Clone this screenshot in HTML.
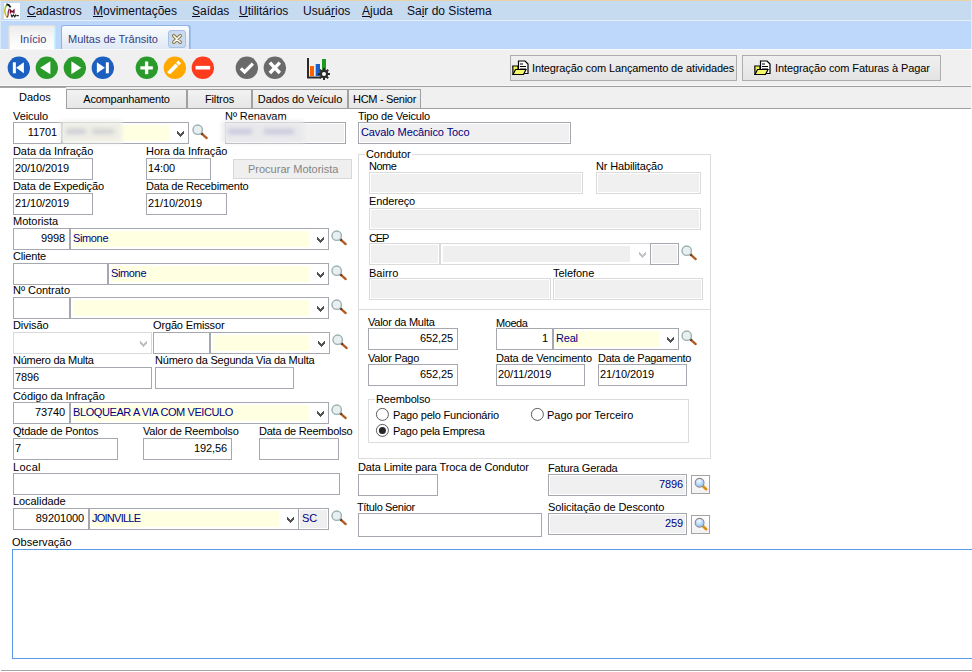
<!DOCTYPE html>
<html><head><meta charset="utf-8">
<style>
*{box-sizing:border-box;margin:0;padding:0}
html,body{width:972px;height:672px;overflow:hidden;background:#fff}
body{position:relative;font-family:"Liberation Sans",sans-serif;font-size:11px;color:#000}
.a{position:absolute}
.l{position:absolute;white-space:nowrap;line-height:13px;letter-spacing:-0.2px}
.b{position:absolute;border:1px solid #a6a8b0;background:#fff;white-space:nowrap;overflow:hidden;line-height:20px;padding:0 1px;letter-spacing:-0.1px}
.r{text-align:right;padding-right:4px}
.g{background:#f0f0f0;box-shadow:inset 0 0 0 1px #fff}
.dg{background:#f0f0f0;border-color:#dadada;box-shadow:inset 0 0 0 1px #fff}
.n{color:#000080}
.y{position:absolute;background:#ffffe1}
.cv{position:absolute;width:9px;height:7px}
.mg{position:absolute;width:17px;height:17px}
.menu span{position:absolute;top:4px;font-size:12px;color:#0c0c20;line-height:14px}
.menu u{text-decoration:none;position:relative}.menu u:after{content:"";position:absolute;left:0;right:0;top:12px;height:1px;background:#0c0c20}
.tab{position:absolute;top:89px;height:20px;border:1px solid #a0a0a0;border-bottom:none;background:linear-gradient(#f2f2f2,#e6e6e6);line-height:18px;text-align:center;letter-spacing:-0.2px}
.ic{position:absolute;top:56px;width:23px;height:23px}
.btn{position:absolute;top:55px;height:26px;border:1px solid #adadad;background:linear-gradient(#f0f0f0,#e3e3e3);line-height:24px;white-space:nowrap;letter-spacing:-0.1px}
</style></head><body>

<!-- title/menu bar -->
<div class="a" style="left:0;top:0;width:972px;height:1px;background:#e8d2a6"></div>
<div class="a" style="left:0;top:1px;width:972px;height:19px;background:#c6daf0"></div>
<div class="a" style="left:0;top:20px;width:972px;height:1px;background:#e6eef8"></div>
<div class="a" style="left:0;top:21px;width:972px;height:28px;background:#bdd8fb"></div>
<div class="a" style="left:0;top:49px;width:972px;height:1px;background:#fafafa"></div>
<div class="a" style="left:0;top:50px;width:972px;height:36px;background:#f0f0f0"></div>
<div class="a" style="left:0;top:1px;width:1px;height:48px;background:#dde8f6"></div>
<div class="a" style="left:971px;top:0;width:1px;height:49px;background:#e2ebf6"></div>

<!-- logo -->
<svg class="a" style="left:4px;top:3px" width="16" height="16" viewBox="0 0 16 16">
<defs><linearGradient id="lg" x1="0" y1="0" x2="0" y2="1"><stop offset="0" stop-color="#80c030"/><stop offset="1" stop-color="#e8c018"/></linearGradient></defs>
<rect width="16" height="16" fill="#fff"/>
<path d="M2.8 1.8 Q0.4 5 0.9 9 Q1.3 12.5 3 14" stroke="url(#lg)" stroke-width="1.6" fill="none"/>
<path d="M2.4 1.6 Q4.6 0.9 6.6 4.4" stroke="#101828" stroke-width="1.9" fill="none"/>
<path d="M5.3 5.8 Q3.8 9 4.1 12 Q4 14 2.6 14.4" stroke="#7a2040" stroke-width="1.2" fill="none"/>
<path d="M6.4 10.6 V7.2 L8.1 9 L9.9 7.2 V10.6" stroke="#701030" stroke-width="1.4" fill="none"/>
<path d="M7 11.4 L8 13.8 L9.4 11.9 L10.8 13.8 L11.9 11.4 M12.4 12.6 H14.8" stroke="#202020" stroke-width="1.2" fill="none"/>
</svg>

<div class="menu">
<span style="left:27px"><u>C</u>adastros</span>
<span style="left:93px"><u>M</u>ovimentações</span>
<span style="left:192px"><u>S</u>aídas</span>
<span style="left:239px"><u>U</u>tilitários</span>
<span style="left:303px">Usuá<u>r</u>ios</span>
<span style="left:362px"><u>A</u>juda</span>
<span style="left:407px">Sa<u>i</u>r do Sistema</span>
</div>

<!-- doc tabs -->
<div class="a" style="left:8px;top:25px;width:48px;height:24px;border:1px solid #dadde2;border-bottom:none;border-radius:3px 3px 0 0;background:linear-gradient(#ececec,#f6f6f6 45%,#ffffff)"></div>
<div class="a" style="left:9px;top:28px;width:1px;height:21px;background:#c4f2ff"></div>
<div class="a" style="left:54px;top:28px;width:1px;height:21px;background:#c4f2ff"></div>
<div class="a" style="left:20px;top:32px;font-size:11px;color:#3b3b80;line-height:14px">Início</div>
<div class="a" style="left:61px;top:25px;width:129px;height:24px;border:1px solid #8fb2e2;border-bottom:none;border-radius:3px 3px 0 0;background:linear-gradient(#fafcff,#dfe8f5);box-shadow:1px 0 0 #9ec0ee"></div>
<div class="a" style="left:68px;top:32px;font-size:11px;color:#35407a;line-height:14px">Multas de Trânsito</div>
<div class="a" style="left:168px;top:30px;width:18px;height:18px;border:1px solid #a9c1e3;border-radius:3px;background:#c9d9ef"></div>
<svg class="a" style="left:172px;top:34px" width="10" height="10" viewBox="0 0 10 10">
<path d="M1.8 1.8 L8.2 8.2 M8.2 1.8 L1.8 8.2" stroke="#86763a" stroke-width="3.4" stroke-linecap="round"/>
<path d="M1.8 1.8 L8.2 8.2 M8.2 1.8 L1.8 8.2" stroke="#fff" stroke-width="1.5" stroke-linecap="round"/>
</svg>

<!-- toolbar icons -->
<svg class="ic" style="left:7px" viewBox="-0.35 -0.3 23 23"><circle cx="11.5" cy="11.5" r="11.2" fill="#1b5fc0"/><rect x="5.5" y="6" width="3" height="11" fill="#fff"/><path d="M8.8 11.5 L16.5 6 L16.5 17 Z" fill="#fff"/></svg>
<svg class="ic" style="left:35px" viewBox="-0.35 -0.3 23 23"><circle cx="11.5" cy="11.5" r="11.2" fill="#2a9b2a"/><path d="M4.8 11.5 L15 5 L15 18 Z" fill="#fff"/></svg>
<svg class="ic" style="left:63px" viewBox="-0.35 -0.3 23 23"><circle cx="11.5" cy="11.5" r="11.2" fill="#2a9b2a"/><path d="M8 5 L18 11.5 L8 18 Z" fill="#fff"/></svg>
<svg class="ic" style="left:91px" viewBox="-0.35 -0.3 23 23"><circle cx="11.5" cy="11.5" r="11.2" fill="#1b5fc0"/><path d="M5.5 6 L13.5 11.5 L5.5 17 Z" fill="#fff"/><rect x="14.5" y="6" width="3" height="11" fill="#fff"/></svg>
<svg class="ic" style="left:135px" viewBox="-0.35 -0.3 23 23"><circle cx="11.5" cy="11.5" r="11.2" fill="#2a9b2a"/><rect x="5" y="10" width="12.5" height="3.2" fill="#fff"/><rect x="9.6" y="5.2" width="3.3" height="12.7" fill="#fff"/></svg>
<svg class="ic" style="left:163px" viewBox="-0.35 -0.3 23 23"><circle cx="11.5" cy="11.5" r="11.2" fill="#ffa900"/><g transform="translate(5.2,17.1) rotate(-46)" fill="#fff"><path d="M0 -1.9 L11.9 -1.9 L11.9 1.9 L1.2 1.9 L0 0.7 Z"/><rect x="12.8" y="-1.9" width="3.3" height="3.8"/></g></svg>
<svg class="ic" style="left:191px" viewBox="-0.35 -0.3 23 23"><circle cx="11.5" cy="11.5" r="11.2" fill="#ff3b1d"/><rect x="4.2" y="9.6" width="14.6" height="3.6" fill="#fff"/></svg>
<svg class="ic" style="left:235px" viewBox="-0.35 -0.3 23 23"><circle cx="11.5" cy="11.5" r="11.2" fill="#6a6a6a"/><path d="M5.5 12 L9.3 15.6 L17.5 7.3" stroke="#fff" stroke-width="3.2" fill="none"/></svg>
<svg class="ic" style="left:263px" viewBox="-0.35 -0.3 23 23"><circle cx="11.5" cy="11.5" r="11.2" fill="#6a6a6a"/><path d="M6.5 6.3 L16.5 16.7 M16.5 6.3 L6.5 16.7" stroke="#fff" stroke-width="3.4"/></svg>
<svg class="a" style="left:305px;top:56px" width="26" height="26" viewBox="0 0 26 26">
<path d="M3 2 V21.5 H15" stroke="#2a2a2a" stroke-width="2" fill="none"/>
<rect x="5" y="10" width="4" height="10" fill="#ff6100"/>
<rect x="10.7" y="8" width="4.3" height="12" fill="#1a5fc8"/>
<rect x="17" y="3" width="4" height="11" fill="#1e9a1e"/>
<g transform="translate(19,18)"><circle r="4.2" fill="#2a2a2a"/><path d="M0 -6 V6 M-6 0 H6 M-4.2 -4.2 L4.2 4.2 M4.2 -4.2 L-4.2 4.2" stroke="#2a2a2a" stroke-width="2"/><circle r="2" fill="#fff"/></g>
</svg>

<!-- integration buttons -->
<div class="btn" style="left:510px;width:227px;padding-left:21px;letter-spacing:-0.13px">Integração com Lançamento de atividades</div>
<div class="btn" style="left:742px;width:199px;padding-left:32px">Integração com Faturas à Pagar</div>
<svg class="a" style="left:512px;top:60px" width="17" height="16" viewBox="0 0 17 16">
<path d="M6.5 1 H13 L16 4 V13.5 H6.5 Z" fill="#fff" stroke="#000" stroke-width="1.2"/>
<path d="M8 4 H11 M8 6.5 H14 M8 9 H14" stroke="#000" stroke-width="1"/>
<path d="M0.8 6 H6 V14.5 H1 Z" fill="#f2f258" stroke="#000" stroke-width="1.2"/>
<path d="M1 14.5 L3.5 9.5 H14 L11.5 14.5 Z" fill="#f6f66a" stroke="#000" stroke-width="1.2"/>
</svg>
<svg class="a" style="left:754px;top:60px" width="17" height="16" viewBox="0 0 17 16">
<path d="M6.5 1 H13 L16 4 V13.5 H6.5 Z" fill="#fff" stroke="#000" stroke-width="1.2"/>
<path d="M8 4 H11 M8 6.5 H14 M8 9 H14" stroke="#000" stroke-width="1"/>
<path d="M0.8 6 H6 V14.5 H1 Z" fill="#f2f258" stroke="#000" stroke-width="1.2"/>
<path d="M1 14.5 L3.5 9.5 H14 L11.5 14.5 Z" fill="#f6f66a" stroke="#000" stroke-width="1.2"/>
</svg>

<!-- form tabs -->
<div class="a" style="left:0;top:85px;width:972px;height:1px;background:#f8f8f8"></div>
<div class="a" style="left:0;top:86px;width:972px;height:1px;background:#a0a0a0"></div>
<div class="a" style="left:66px;top:87px;width:906px;height:22px;background:#f0f0f0"></div>
<div class="a" style="left:0;top:87px;width:66px;height:22px;background:#fff"></div>
<div class="a" style="left:0;top:87px;width:66px;height:1px;background:#a8a8a8"></div>
<div class="l" style="left:19px;top:91px;letter-spacing:0">Dados</div>
<div class="tab" style="left:66px;width:121px;letter-spacing:-0.2px">Acompanhamento</div>
<div class="tab" style="left:187px;width:65px;letter-spacing:-0.12px">Filtros</div>
<div class="tab" style="left:252px;width:96px;letter-spacing:-0.12px">Dados do Veículo</div>
<div class="tab" style="left:348px;width:73px;letter-spacing:-0.3px">HCM - Senior</div>
<div class="a" style="left:66px;top:108px;width:906px;height:1px;background:#a0a0a0"></div>
<div class="a" style="left:971px;top:50px;width:1px;height:59px;background:#f7f7f7"></div>

<!-- FORM CONTENT (added below) -->
<!--FORM-->
<div class="l" style="left:13px;top:110px;letter-spacing:-0.07px">Veiculo</div>
<div class="b r" style="left:13px;top:122px;width:49px;height:22px;line-height:18px">11701</div>
<div class="b" style="left:62px;top:122px;width:127px;height:22px;line-height:18px"></div>
<div class="y" style="left:65px;top:125px;width:104px;height:16px"></div>
<svg class="a" style="left:177px;top:131px" width="7" height="6" viewBox="0 0 7 6" shape-rendering="crispEdges"><path d="M0 0H1V1H2V2H3V3H4V2H5V1H6V0H7V3H6V4H5V5H4V6H3V5H2V4H1V3H0Z" fill="#535353"/></svg>
<div class="a" style="left:60px;top:121px;width:62px;height:22px;background:#eeeee8;filter:blur(2px);opacity:.9"></div><div class="a" style="left:66px;top:129px;width:20px;height:5px;background:#b4b6c6;filter:blur(2.2px);opacity:.6"></div><div class="a" style="left:92px;top:129px;width:22px;height:5px;background:#bcbcc4;filter:blur(2.2px);opacity:.6"></div>
<svg class="mg" style="left:192px;top:123px" viewBox="0 0 17 17"><path d="M9.4 10.4 L14.7 15.1" stroke="#b05a22" stroke-width="2.3" stroke-linecap="round"/><path d="M9.2 10.2 L10.6 11.5" stroke="#5a3018" stroke-width="2.3"/><circle cx="5.7" cy="6.7" r="4.7" fill="#e9eff0" stroke="#9bb0b0" stroke-width="1.4"/></svg>
<div class="l" style="left:225px;top:110px;letter-spacing:-0.06px">Nº Renavam</div>
<div class="b g" style="left:225px;top:122px;width:121px;height:22px;line-height:18px"></div>
<div class="a" style="left:222px;top:121px;width:82px;height:22px;background:#e9e9ec;filter:blur(2px);opacity:.9"></div><div class="a" style="left:228px;top:129px;width:24px;height:5px;background:#aeb0d2;filter:blur(2.2px);opacity:.6"></div><div class="a" style="left:264px;top:129px;width:30px;height:5px;background:#b2b2d0;filter:blur(2.2px);opacity:.6"></div>
<div class="l" style="left:358px;top:110px;letter-spacing:-0.2px">Tipo de Veiculo</div>
<div class="b g n" style="left:358px;top:122px;width:213px;height:22px;line-height:18px;padding-left:2px">Cavalo Mecânico Toco</div>
<div class="l" style="left:13px;top:145px;letter-spacing:-0.07px">Data da Infração</div>
<div class="b" style="left:13px;top:158px;width:80px;height:22px;line-height:18px">20/10/2019</div>
<div class="l" style="left:146px;top:145px;letter-spacing:-0.03px">Hora da Infração</div>
<div class="b" style="left:146px;top:158px;width:65px;height:22px;line-height:18px">14:00</div>
<div class="a" style="left:233px;top:159px;width:119px;height:20px;border:1px solid #d8d8d8;background:#efefef;color:#858585;text-align:left;line-height:19px;letter-spacing:0px;padding-left:14px">Procurar Motorista</div>
<div class="l" style="left:13px;top:180px;letter-spacing:-0.12px">Data de Expedição</div>
<div class="b" style="left:13px;top:193px;width:80px;height:22px;line-height:18px">21/10/2019</div>
<div class="l" style="left:146px;top:180px;letter-spacing:-0.21px">Data de Recebimento</div>
<div class="b" style="left:146px;top:193px;width:81px;height:22px;line-height:18px">21/10/2019</div>
<div class="l" style="left:13px;top:215px;letter-spacing:0.0px">Motorista</div>
<div class="b r" style="left:13px;top:228px;width:57px;height:22px;line-height:18px">9998</div>
<div class="b" style="left:70px;top:228px;width:259px;height:22px;line-height:18px"></div>
<div class="y" style="left:73px;top:231px;width:236px;height:16px"></div>
<div class="l n" style="left:73px;top:232px;letter-spacing:-0.36px">Simone</div>
<svg class="a" style="left:317px;top:237px" width="7" height="6" viewBox="0 0 7 6" shape-rendering="crispEdges"><path d="M0 0H1V1H2V2H3V3H4V2H5V1H6V0H7V3H6V4H5V5H4V6H3V5H2V4H1V3H0Z" fill="#535353"/></svg>
<svg class="mg" style="left:331px;top:229px" viewBox="0 0 17 17"><path d="M9.4 10.4 L14.7 15.1" stroke="#b05a22" stroke-width="2.3" stroke-linecap="round"/><path d="M9.2 10.2 L10.6 11.5" stroke="#5a3018" stroke-width="2.3"/><circle cx="5.7" cy="6.7" r="4.7" fill="#e9eff0" stroke="#9bb0b0" stroke-width="1.4"/></svg>
<div class="l" style="left:13px;top:250px;letter-spacing:-0.17px">Cliente</div>
<div class="b" style="left:13px;top:263px;width:95px;height:22px;line-height:18px"></div>
<div class="b" style="left:108px;top:263px;width:221px;height:22px;line-height:18px"></div>
<div class="y" style="left:111px;top:266px;width:198px;height:16px"></div>
<div class="l n" style="left:111px;top:267px;letter-spacing:-0.36px">Simone</div>
<svg class="a" style="left:317px;top:272px" width="7" height="6" viewBox="0 0 7 6" shape-rendering="crispEdges"><path d="M0 0H1V1H2V2H3V3H4V2H5V1H6V0H7V3H6V4H5V5H4V6H3V5H2V4H1V3H0Z" fill="#535353"/></svg>
<svg class="mg" style="left:331px;top:264px" viewBox="0 0 17 17"><path d="M9.4 10.4 L14.7 15.1" stroke="#b05a22" stroke-width="2.3" stroke-linecap="round"/><path d="M9.2 10.2 L10.6 11.5" stroke="#5a3018" stroke-width="2.3"/><circle cx="5.7" cy="6.7" r="4.7" fill="#e9eff0" stroke="#9bb0b0" stroke-width="1.4"/></svg>
<div class="l" style="left:13px;top:284px;letter-spacing:-0.02px">Nº Contrato</div>
<div class="b" style="left:13px;top:297px;width:57px;height:22px;line-height:18px"></div>
<div class="b" style="left:70px;top:297px;width:259px;height:22px;line-height:18px"></div>
<div class="y" style="left:73px;top:300px;width:236px;height:16px"></div>
<svg class="a" style="left:317px;top:306px" width="7" height="6" viewBox="0 0 7 6" shape-rendering="crispEdges"><path d="M0 0H1V1H2V2H3V3H4V2H5V1H6V0H7V3H6V4H5V5H4V6H3V5H2V4H1V3H0Z" fill="#535353"/></svg>
<svg class="mg" style="left:331px;top:298px" viewBox="0 0 17 17"><path d="M9.4 10.4 L14.7 15.1" stroke="#b05a22" stroke-width="2.3" stroke-linecap="round"/><path d="M9.2 10.2 L10.6 11.5" stroke="#5a3018" stroke-width="2.3"/><circle cx="5.7" cy="6.7" r="4.7" fill="#e9eff0" stroke="#9bb0b0" stroke-width="1.4"/></svg>
<div class="l" style="left:13px;top:319px;letter-spacing:-0.08px">Divisão</div>
<div class="b" style="left:13px;top:332px;width:139px;height:22px;line-height:18px;border-color:#dadada"></div>
<svg class="a" style="left:140px;top:341px" width="7" height="6" viewBox="0 0 7 6" shape-rendering="crispEdges"><path d="M0 0H1V1H2V2H3V3H4V2H5V1H6V0H7V3H6V4H5V5H4V6H3V5H2V4H1V3H0Z" fill="#c0c0c0"/></svg>
<div class="l" style="left:153px;top:319px;letter-spacing:-0.15px">Orgão Emissor</div>
<div class="b" style="left:153px;top:332px;width:57px;height:22px;line-height:18px"></div>
<div class="b" style="left:210px;top:332px;width:120px;height:22px;line-height:18px"></div>
<div class="y" style="left:213px;top:335px;width:97px;height:16px"></div>
<svg class="a" style="left:318px;top:341px" width="7" height="6" viewBox="0 0 7 6" shape-rendering="crispEdges"><path d="M0 0H1V1H2V2H3V3H4V2H5V1H6V0H7V3H6V4H5V5H4V6H3V5H2V4H1V3H0Z" fill="#535353"/></svg>
<svg class="mg" style="left:332px;top:333px" viewBox="0 0 17 17"><path d="M9.4 10.4 L14.7 15.1" stroke="#b05a22" stroke-width="2.3" stroke-linecap="round"/><path d="M9.2 10.2 L10.6 11.5" stroke="#5a3018" stroke-width="2.3"/><circle cx="5.7" cy="6.7" r="4.7" fill="#e9eff0" stroke="#9bb0b0" stroke-width="1.4"/></svg>
<div class="l" style="left:13px;top:354px;letter-spacing:-0.25px">Número da Multa</div>
<div class="b" style="left:13px;top:367px;width:139px;height:22px;line-height:18px">7896</div>
<div class="l" style="left:155px;top:354px;letter-spacing:-0.2px">Número da Segunda Via da Multa</div>
<div class="b" style="left:155px;top:367px;width:139px;height:22px;line-height:18px"></div>
<div class="l" style="left:13px;top:390px;letter-spacing:-0.07px">Código da Infração</div>
<div class="b r" style="left:13px;top:402px;width:57px;height:22px;line-height:18px">73740</div>
<div class="b" style="left:70px;top:402px;width:259px;height:22px;line-height:18px"></div>
<div class="y" style="left:73px;top:405px;width:236px;height:16px"></div>
<div class="l n" style="left:73px;top:406px;letter-spacing:-0.41px">BLOQUEAR A VIA COM VEICULO</div>
<svg class="a" style="left:317px;top:411px" width="7" height="6" viewBox="0 0 7 6" shape-rendering="crispEdges"><path d="M0 0H1V1H2V2H3V3H4V2H5V1H6V0H7V3H6V4H5V5H4V6H3V5H2V4H1V3H0Z" fill="#535353"/></svg>
<svg class="mg" style="left:331px;top:403px" viewBox="0 0 17 17"><path d="M9.4 10.4 L14.7 15.1" stroke="#b05a22" stroke-width="2.3" stroke-linecap="round"/><path d="M9.2 10.2 L10.6 11.5" stroke="#5a3018" stroke-width="2.3"/><circle cx="5.7" cy="6.7" r="4.7" fill="#e9eff0" stroke="#9bb0b0" stroke-width="1.4"/></svg>
<div class="l" style="left:13px;top:425px;letter-spacing:-0.22px">Qtdade de Pontos</div>
<div class="b" style="left:13px;top:438px;width:105px;height:22px;line-height:18px">7</div>
<div class="l" style="left:143px;top:425px;letter-spacing:-0.18px">Valor de Reembolso</div>
<div class="b r" style="left:143px;top:438px;width:89px;height:22px;line-height:18px">192,56</div>
<div class="l" style="left:259px;top:425px;letter-spacing:-0.22px">Data de Reembolso</div>
<div class="b" style="left:259px;top:438px;width:80px;height:22px;line-height:18px"></div>
<div class="l" style="left:13px;top:461px;letter-spacing:0.3px">Local</div>
<div class="b" style="left:13px;top:473px;width:327px;height:22px;line-height:18px"></div>
<div class="l" style="left:13px;top:495px;letter-spacing:-0.06px">Localidade</div>
<div class="b r" style="left:13px;top:508px;width:76px;height:22px;line-height:18px">89201000</div>
<div class="b" style="left:89px;top:508px;width:210px;height:22px;line-height:18px"></div>
<div class="y" style="left:92px;top:511px;width:187px;height:16px"></div>
<div class="l n" style="left:92px;top:512px;letter-spacing:-0.75px">JOINVILLE</div>
<svg class="a" style="left:287px;top:517px" width="7" height="6" viewBox="0 0 7 6" shape-rendering="crispEdges"><path d="M0 0H1V1H2V2H3V3H4V2H5V1H6V0H7V3H6V4H5V5H4V6H3V5H2V4H1V3H0Z" fill="#535353"/></svg>
<div class="b" style="left:298px;top:508px;width:31px;height:22px;line-height:18px"></div>
<div class="a" style="left:300px;top:510px;width:27px;height:18px;background:#efefef"></div>
<div class="l n" style="left:302px;top:512px">SC</div>
<svg class="mg" style="left:331px;top:509px" viewBox="0 0 17 17"><path d="M9.4 10.4 L14.7 15.1" stroke="#b05a22" stroke-width="2.3" stroke-linecap="round"/><path d="M9.2 10.2 L10.6 11.5" stroke="#5a3018" stroke-width="2.3"/><circle cx="5.7" cy="6.7" r="4.7" fill="#e9eff0" stroke="#9bb0b0" stroke-width="1.4"/></svg>
<div class="l" style="left:12px;top:536px;letter-spacing:0.03px">Observação</div>
<div class="a" style="left:12px;top:549px;width:980px;height:110px;border:1px solid #5a9ae6"></div>
<div class="a" style="left:1px;top:670px;width:971px;height:1px;background:#a5a5a5"></div>
<div class="a" style="left:358px;top:154px;width:353px;height:305px;border:1px solid #dcdcdc"></div>
<div class="a" style="left:358px;top:309px;width:353px;height:1px;background:#dcdcdc"></div>
<div class="l" style="left:365px;top:148px;background:#fff;padding:0 1px;letter-spacing:-0.07px">Condutor</div>
<div class="l" style="left:369px;top:160px;letter-spacing:-0.53px">Nome</div>
<div class="b dg" style="left:369px;top:172px;width:214px;height:22px;line-height:18px"></div>
<div class="l" style="left:596px;top:160px;letter-spacing:-0.15px">Nr Habilitação</div>
<div class="b dg" style="left:596px;top:172px;width:105px;height:22px;line-height:18px"></div>
<div class="l" style="left:369px;top:195px;letter-spacing:-0.14px">Endereço</div>
<div class="b dg" style="left:369px;top:208px;width:332px;height:22px;line-height:18px"></div>
<div class="l" style="left:369px;top:232px;letter-spacing:-1.1px">CEP</div>
<div class="b dg" style="left:369px;top:243px;width:71px;height:22px;line-height:18px"></div>
<div class="b" style="left:440px;top:243px;width:211px;height:22px;line-height:18px;border-color:#dadada"></div>
<div class="a" style="left:443px;top:246px;width:187px;height:16px;background:#efefef"></div>
<svg class="a" style="left:639px;top:252px" width="7" height="6" viewBox="0 0 7 6" shape-rendering="crispEdges"><path d="M0 0H1V1H2V2H3V3H4V2H5V1H6V0H7V3H6V4H5V5H4V6H3V5H2V4H1V3H0Z" fill="#c4c4c4"/></svg>
<div class="b g" style="left:650px;top:243px;width:29px;height:22px;line-height:18px"></div>
<svg class="mg" style="left:681px;top:244px" viewBox="0 0 17 17"><path d="M9.4 10.4 L14.7 15.1" stroke="#b05a22" stroke-width="2.3" stroke-linecap="round"/><path d="M9.2 10.2 L10.6 11.5" stroke="#5a3018" stroke-width="2.3"/><circle cx="5.7" cy="6.7" r="4.7" fill="#e9eff0" stroke="#9bb0b0" stroke-width="1.4"/></svg>
<div class="l" style="left:369px;top:267px;letter-spacing:0.0px">Bairro</div>
<div class="b dg" style="left:369px;top:278px;width:182px;height:22px;line-height:18px"></div>
<div class="l" style="left:553px;top:267px;letter-spacing:-0.04px">Telefone</div>
<div class="b dg" style="left:553px;top:278px;width:150px;height:22px;line-height:18px"></div>
<div class="l" style="left:368px;top:316px;letter-spacing:-0.25px">Valor da Multa</div>
<div class="b r" style="left:368px;top:328px;width:90px;height:22px;line-height:18px">652,25</div>
<div class="l" style="left:496px;top:317px;letter-spacing:-0.44px">Moeda</div>
<div class="b r" style="left:496px;top:328px;width:57px;height:22px;line-height:18px">1</div>
<div class="b" style="left:553px;top:328px;width:126px;height:22px;line-height:18px"></div>
<div class="y" style="left:556px;top:331px;width:103px;height:16px"></div>
<div class="l n" style="left:556px;top:332px">Real</div>
<svg class="a" style="left:667px;top:337px" width="7" height="6" viewBox="0 0 7 6" shape-rendering="crispEdges"><path d="M0 0H1V1H2V2H3V3H4V2H5V1H6V0H7V3H6V4H5V5H4V6H3V5H2V4H1V3H0Z" fill="#535353"/></svg>
<svg class="mg" style="left:681px;top:329px" viewBox="0 0 17 17"><path d="M9.4 10.4 L14.7 15.1" stroke="#b05a22" stroke-width="2.3" stroke-linecap="round"/><path d="M9.2 10.2 L10.6 11.5" stroke="#5a3018" stroke-width="2.3"/><circle cx="5.7" cy="6.7" r="4.7" fill="#e9eff0" stroke="#9bb0b0" stroke-width="1.4"/></svg>
<div class="l" style="left:368px;top:352px;letter-spacing:-0.25px">Valor Pago</div>
<div class="b r" style="left:368px;top:364px;width:90px;height:22px;line-height:18px">652,25</div>
<div class="l" style="left:496px;top:352px;letter-spacing:-0.18px">Data de Vencimento</div>
<div class="b" style="left:496px;top:364px;width:89px;height:22px;line-height:18px">20/11/2019</div>
<div class="l" style="left:598px;top:352px;letter-spacing:-0.28px">Data de Pagamento</div>
<div class="b" style="left:598px;top:364px;width:89px;height:22px;line-height:18px">21/10/2019</div>
<div class="a" style="left:368px;top:399px;width:321px;height:44px;border:1px solid #dcdcdc"></div>
<div class="l" style="left:375px;top:393px;background:#fff;padding:0 1px;letter-spacing:-0.16px">Reembolso</div>
<svg class="a" style="left:375px;top:407px" width="15" height="15" viewBox="0 0 15 15"><circle cx="7.399999999999977" cy="7.399999999999977" r="6" fill="#fff" stroke="#4a4a4a" stroke-width="0.9"/></svg>
<div class="l" style="left:393px;top:409px;letter-spacing:-0.2px">Pago pelo Funcionário</div>
<svg class="a" style="left:530px;top:407px" width="15" height="15" viewBox="0 0 15 15"><circle cx="7.399999999999977" cy="7.399999999999977" r="6" fill="#fff" stroke="#4a4a4a" stroke-width="0.9"/></svg>
<div class="l" style="left:547px;top:409px;letter-spacing:-0.02px">Pago por Terceiro</div>
<svg class="a" style="left:375px;top:423px" width="15" height="15" viewBox="0 0 15 15"><circle cx="7.399999999999977" cy="7.399999999999977" r="6" fill="#fff" stroke="#4a4a4a" stroke-width="0.9"/><circle cx="7.399999999999977" cy="7.399999999999977" r="3.5" fill="#262626"/></svg>
<div class="l" style="left:393px;top:425px;letter-spacing:-0.3px">Pago pela Empresa</div>
<div class="l" style="left:358px;top:461px;letter-spacing:-0.12px">Data Limite para Troca de Condutor</div>
<div class="b" style="left:358px;top:474px;width:80px;height:22px;line-height:18px"></div>
<div class="l" style="left:357px;top:501px;letter-spacing:-0.35px">Título Senior</div>
<div class="b" style="left:358px;top:513px;width:184px;height:24px;line-height:20px"></div>
<div class="l" style="left:548px;top:462px;letter-spacing:-0.15px">Fatura Gerada</div>
<div class="b g n r" style="left:548px;top:474px;width:139px;height:22px;line-height:18px;padding-right:3px">7896</div>
<div class="l" style="left:548px;top:501px;letter-spacing:-0.07px">Solicitação de Desconto</div>
<div class="b g n r" style="left:548px;top:513px;width:139px;height:22px;line-height:18px;padding-right:3px">259</div>
<div class="a" style="left:691px;top:475px;width:19px;height:19px;border:1px solid #a3a3a3;background:linear-gradient(#ffffff,#f2f2f2)"></div>
<svg class="a" style="left:694px;top:477px" width="14" height="14" viewBox="0 0 14 14"><defs><radialGradient id="bg691475" cx="0.45" cy="0.3" r="0.7"><stop offset="0" stop-color="#f4faff"/><stop offset="1" stop-color="#8cc0f4"/></radialGradient></defs><path d="M8.8 9 L12.2 12.2" stroke="#e08a10" stroke-width="2.6" stroke-linecap="round"/><circle cx="5.6" cy="5.8" r="4.4" fill="url(#bg691475)" stroke="#8a8a8a" stroke-width="1.1"/></svg>
<div class="a" style="left:691px;top:515px;width:19px;height:19px;border:1px solid #a3a3a3;background:linear-gradient(#ffffff,#f2f2f2)"></div>
<svg class="a" style="left:694px;top:517px" width="14" height="14" viewBox="0 0 14 14"><defs><radialGradient id="bg691515" cx="0.45" cy="0.3" r="0.7"><stop offset="0" stop-color="#f4faff"/><stop offset="1" stop-color="#8cc0f4"/></radialGradient></defs><path d="M8.8 9 L12.2 12.2" stroke="#e08a10" stroke-width="2.6" stroke-linecap="round"/><circle cx="5.6" cy="5.8" r="4.4" fill="url(#bg691515)" stroke="#8a8a8a" stroke-width="1.1"/></svg>
<!--/FORM-->

</body></html>
